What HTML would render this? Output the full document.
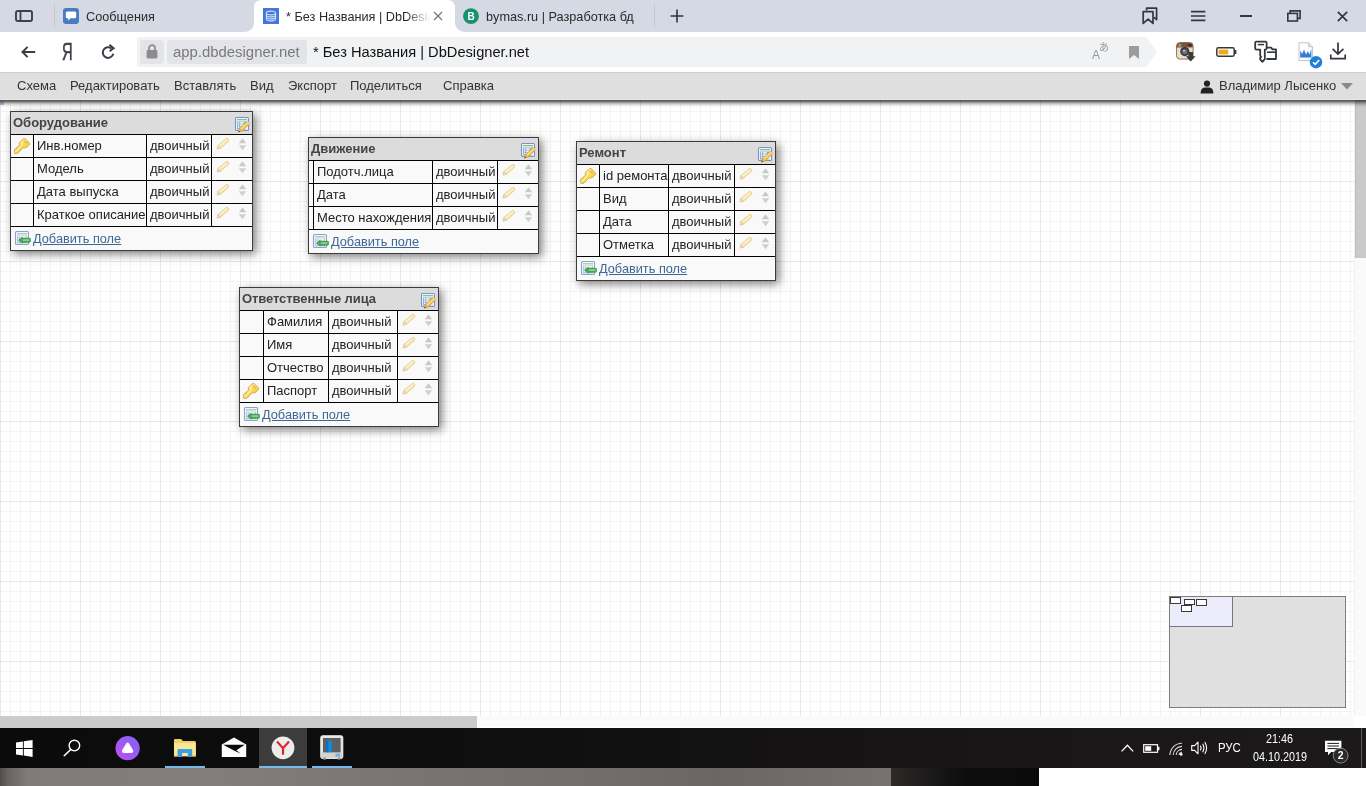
<!DOCTYPE html><html lang="ru"><head><meta charset="utf-8"><title>* Без Названия | DbDesigner.net</title><style>
*{box-sizing:border-box;margin:0;padding:0}
html,body{width:1366px;height:786px;overflow:hidden;background:#fff}
body{position:relative;font-family:"Liberation Sans", Arial, sans-serif;font-size:13px;color:#222}
.abs{position:absolute}
#tabbar,#addr,#menubar,#taskbar,.tbl{will-change:transform}
#tabbar{position:absolute;left:0;top:0;width:1366px;height:32px;background:#d5d9e3}
#addr{position:absolute;left:0;top:32px;width:1366px;height:40px;background:#fff}
#menubar{position:absolute;left:0;top:72px;width:1366px;height:28px;background:#dfdfdf;border-top:1px solid #cdcdcd;border-bottom:1px solid #e8e8e8;z-index:5}
#mshadow{position:absolute;left:0;top:100px;width:1366px;height:8px;z-index:4;background:linear-gradient(to bottom,rgba(0,0,0,.70) 0,rgba(0,0,0,.575) 1px,rgba(0,0,0,.45) 2px,rgba(0,0,0,.325) 3px,rgba(0,0,0,.2) 4px,rgba(0,0,0,.11) 5px,rgba(0,0,0,.05) 6px,rgba(0,0,0,0) 7.5px)}
#menubar span{position:absolute;top:5px;font-size:13px;line-height:16px;color:#333;white-space:nowrap}
#canvas{position:absolute;left:0;top:100px;width:1354px;height:616px;overflow:hidden;background-color:#fff;
 background-image:linear-gradient(to bottom,#e7e7e7 1px,transparent 1px),linear-gradient(to right,#e7e7e7 1px,transparent 1px),linear-gradient(to bottom,#f3f3f3 1px,transparent 1px),linear-gradient(to right,#f3f3f3 1px,transparent 1px);
 background-size:80px 80px,80px 80px,10px 10px,10px 10px;
 background-position:0 1px,0 0,0 1px,0 0;}
.tbl{position:absolute;box-sizing:content-box;border:1px solid #3c3c3c;background:#f9f9f9;box-shadow:3px 3px 9px rgba(0,0,0,.5)}
.th{position:absolute;left:0;top:0;height:22px;background:#dcdcdc;font-weight:bold;font-size:13px;line-height:22px;padding-left:2px;color:#444;white-space:nowrap}
.td{position:absolute;height:22px;line-height:22px;padding-left:3px;white-space:nowrap;color:#222;overflow:hidden}
.hl{position:absolute;left:0;height:1px;background:#000}
.vl{position:absolute;width:1px;background:#000}
.ic{position:absolute;display:block;overflow:visible}
.add{position:absolute;height:23px;line-height:23px;font-size:12.75px;color:#3d6796;text-decoration:underline;white-space:nowrap}
#vsb{position:absolute;left:1354px;top:100px;width:12px;height:616px;background:#fafafa;border-left:1px solid #f0f0f0}
#vsb i{position:absolute;left:0;top:0;width:12px;height:158px;background:#c9c9c9;border-left:1px solid #bcbcbc}
#hsb{position:absolute;left:0;top:716px;width:1354px;height:11px;background:#fafafa}
#hsb i{position:absolute;left:0;top:0;width:477px;height:12px;background:#cbcbcb}
#taskbar{position:absolute;left:0;top:728px;width:1366px;height:40px;background:linear-gradient(90deg,#0b0b0b 0%,#0e0e0e 30%,#151314 60%,#1a1718 80%,#1b191a 100%)}
#strip{position:absolute;left:0;top:768px;width:1366px;height:18px;background:#fff}
#strip .a{position:absolute;left:0;top:0;width:891px;height:18px;background:linear-gradient(90deg,#4f4a48 0,#6a6361 8px,#827a78 28px,#857d7b 200px,#7b7371 420px,#726c6b 600px,#6b6566 720px,#777172 891px)}
#strip .b{position:absolute;left:891px;top:0;width:148px;height:18px;background:linear-gradient(90deg,#2e2a2a,#1c1a1a 25%,#0d0d0d 50%,#0b0b0b)}
#mini{position:absolute;left:1169px;top:596px;width:177px;height:112px;background:#e0e0e0;border:1px solid #7d7d7d;z-index:3}
#mini .vp{position:absolute;left:0;top:0;width:63px;height:30px;background:#ececfc;border-right:1px solid #777;border-bottom:1px solid #777}
#mini b{position:absolute;background:#fff;border:1px solid #3a3a3a}
.tt{position:absolute;white-space:nowrap;font-size:12.7px;line-height:16px;color:#2a2a2a}
.tray{position:absolute;color:#fff;white-space:nowrap;font-size:10.8px;line-height:12px;transform:scaleY(1.13);transform-origin:0 81%}
</style></head><body>
<svg width="0" height="0" style="position:absolute"><defs><linearGradient id="kg" x1="0" y1="0" x2="1" y2="1"><stop offset="0" stop-color="#fdf3ac"/><stop offset=".5" stop-color="#f8d95a"/><stop offset="1" stop-color="#efbf33"/></linearGradient></defs></svg>
<div id="tabbar"><svg class="ic" style="left:244px;top:0" width="222" height="32" viewBox="0 0 222 32"><path d="M0 32 Q8 32 10 24 L10 8 Q10 0 18 0 L203 0 Q211 0 211 8 L211 24 Q213 32 222 32 Z" fill="#fff"/></svg><svg class="ic" style="left:15px;top:10px" width="18" height="12" viewBox="0 0 18 12"><rect x="1" y="1" width="16" height="10" rx="1.8" fill="none" stroke="#3b404b" stroke-width="1.9"/><rect x="4.6" y="1" width="1.8" height="10" fill="#3b404b"/></svg><div class="abs" style="left:54px;top:4px;width:1px;height:23px;background:#c3c7d1"></div><svg class="ic" style="left:63px;top:8px" width="16" height="16" viewBox="0 0 16 16"><rect width="16" height="16" rx="3.2" fill="#4a7cc2"/><path d="M4.3 3.6 H11.7 Q13.2 3.6 13.2 5.1 V8.7 Q13.2 10.2 11.7 10.2 H7.6 L5.2 12.4 V10.2 H4.3 Q2.8 10.2 2.8 8.7 V5.1 Q2.8 3.6 4.3 3.6 Z" fill="#fff"/></svg><div class="tt" style="left:86px;top:9px">Сообщения</div><svg class="ic" style="left:263px;top:8px" width="16" height="16" viewBox="0 0 16 16"><rect width="16" height="16" fill="#4577d6"/><g fill="none" stroke="#cfe0ff" stroke-width="1.1"><ellipse cx="8" cy="5" rx="4.6" ry="1.9"/><path d="M3.4 5 V11 C3.4 13.5 12.6 13.5 12.6 11 V5"/><path d="M3.4 7 C3.4 9.5 12.6 9.5 12.6 7 M3.4 9 C3.4 11.5 12.6 11.5 12.6 9"/></g></svg><div class="tt" style="left:286px;top:9px;width:146px;overflow:hidden;-webkit-mask-image:linear-gradient(90deg,#000 120px,transparent 144px);mask-image:linear-gradient(90deg,#000 120px,transparent 144px)">* Без Названия | DbDesigner.net</div><svg class="ic" style="left:433px;top:11px" width="10" height="10" viewBox="0 0 10 10"><path d="M1 1 L9 9 M9 1 L1 9" stroke="#6d7078" stroke-width="1.1" fill="none"/></svg><svg class="ic" style="left:463px;top:8px" width="16" height="16" viewBox="0 0 16 16"><circle cx="8" cy="8.2" r="7.9" fill="#179270"/><text x="8" y="11.8" text-anchor="middle" font-family="Liberation Sans, Arial, sans-serif" font-weight="bold" font-size="10" fill="#fff">B</text></svg><div class="tt" style="left:486px;top:9px">bymas.ru | Разработка бд</div><div class="abs" style="left:654px;top:4px;width:1px;height:23px;background:#c3c7d1"></div><svg class="ic" style="left:670px;top:9px" width="14" height="14" viewBox="0 0 14 14"><path d="M7 .6 V13.4 M.6 7 H13.4" stroke="#2f333b" stroke-width="1.6" fill="none"/></svg><svg class="ic" style="left:1142px;top:7px" width="16" height="18" viewBox="0 0 16 18"><path d="M4.6 3.6 V1.2 H14.6 V12.6 L12 10.4" fill="none" stroke="#33373f" stroke-width="1.7" stroke-linejoin="round"/><path d="M1.2 4.6 H11 V16.4 L6.1 12.2 L1.2 16.4 Z" fill="none" stroke="#33373f" stroke-width="1.7" stroke-linejoin="round"/></svg><svg class="ic" style="left:1191px;top:10px" width="15" height="12" viewBox="0 0 15 12"><path d="M0 1.6 H14.4 M0 6 H14.4 M0 10.4 H14.4" stroke="#33373f" stroke-width="1.7"/></svg><div class="abs" style="left:1240px;top:15px;width:12px;height:2px;background:#33373f"></div><svg class="ic" style="left:1287px;top:10px" width="14" height="12" viewBox="0 0 14 12"><path d="M3.2 3 V.9 H13.1 V8.4 H10.6" fill="none" stroke="#33373f" stroke-width="1.6"/><rect x=".8" y="3.4" width="9.6" height="7.6" fill="none" stroke="#33373f" stroke-width="1.6"/></svg><svg class="ic" style="left:1337px;top:11px" width="11" height="11" viewBox="0 0 11 11"><path d="M.8 .8 L10.2 10.2 M10.2 .8 L.8 10.2" stroke="#33373f" stroke-width="1.7" fill="none"/></svg></div>
<div id="addr"><svg class="ic" style="left:21px;top:14px" width="15" height="12" viewBox="0 0 15 12"><path d="M14.2 6 H1.8 M6.6 .9 L1.5 6 L6.6 11.1" fill="none" stroke="#3a3e47" stroke-width="2" stroke-linejoin="miter"/></svg><div class="abs" style="left:62px;top:7px;font-size:23px;line-height:26px;color:#3a3e47;-webkit-text-stroke:.55px #3a3e47;transform:scaleX(.64);transform-origin:0 0">Я</div><svg class="ic" style="left:101px;top:12px" width="15" height="16" viewBox="0 0 15 16"><path d="M10.6 4.6 A5.3 5.3 0 1 0 12.3 9.6" fill="none" stroke="#3a3e47" stroke-width="2"/><path d="M8.4 .8 L12.6 4.2 L8.6 7.2" fill="none" stroke="#3a3e47" stroke-width="2" stroke-linejoin="miter"/></svg><svg class="ic" style="left:137px;top:5px" width="1022" height="30" viewBox="0 0 1022 30"><path d="M4 0 H1009 L1020 15 L1009 30 H4 Q0 30 0 26 V4 Q0 0 4 0 Z" fill="#f1f2f4"/></svg><div class="abs" style="left:140px;top:8px;width:24px;height:24px;border-radius:3px;background:#e3e4e7"></div><svg class="ic" style="left:146px;top:12px" width="12" height="15" viewBox="0 0 12 15"><path d="M3 6.4 V4.2 A3 3 0 0 1 9 4.2 V6.4" fill="none" stroke="#8b8b8b" stroke-width="1.7"/><rect x=".6" y="6" width="10.8" height="8.4" rx="1.4" fill="#8b8b8b"/></svg><div class="abs" style="left:167px;top:8px;width:140px;height:24px;border-radius:3px;background:#e3e4e7"></div><div class="abs" style="left:173px;top:10px;font-size:14.9px;line-height:20px;color:#7a7a7a;white-space:nowrap">app.dbdesigner.net</div><div class="abs" style="left:313px;top:10px;font-size:14.65px;line-height:20px;color:#111;white-space:nowrap">* Без Названия | DbDesigner.net</div><div class="abs" style="left:1092px;top:17px;font-size:12px;line-height:12px;color:#9a9a9a">A</div><div class="abs" style="left:1099px;top:11px;font-size:10px;line-height:10px;color:#9a9a9a;font-family:'Liberation Sans','Noto Sans CJK JP',sans-serif">あ</div><svg class="ic" style="left:1129px;top:14px" width="10" height="13" viewBox="0 0 10 13"><path d="M0 0 H10 V13 L5 9 L0 13 Z" fill="#9c9c9c"/></svg><svg class="ic" style="left:1176px;top:10px" width="20" height="20" viewBox="0 0 20 20"><rect x=".5" y=".5" width="16.6" height="16.6" rx="3.4" fill="#e9dcc8" stroke="#8a6a4f" stroke-width=".9"/><path d="M.8 4 Q.8 .8 4 .8 H13.6 Q16.8 .8 16.8 4 V5.6 H.8 Z" fill="#7b4f35"/><rect x="1.6" y="1.6" width="1" height="3.6" fill="#d9442f"/><rect x="2.8" y="1.6" width="1" height="3.6" fill="#e8a33a"/><rect x="4" y="1.6" width="1" height="3.6" fill="#5aa34a"/><rect x="5.2" y="1.6" width="1" height="3.6" fill="#3f7fcf"/><rect x="12.4" y="2" width="3.2" height="2.6" rx=".6" fill="#3a2a22"/><circle cx="8.8" cy="9.6" r="4.6" fill="#3b3b3f"/><circle cx="8.8" cy="9.6" r="2.6" fill="#6b6f7a"/><circle cx="8" cy="8.8" r=".9" fill="#d8dce6"/><path d="M12.4 10 H17 V14.2 H19.6 L14.7 19.6 L9.8 14.2 H12.4 Z" fill="#3a3a3a"/></svg><svg class="ic" style="left:1216px;top:15px" width="21" height="10" viewBox="0 0 21 10"><rect x=".8" y=".8" width="17.4" height="8.4" rx="1.6" fill="#fff" stroke="#33373f" stroke-width="1.5"/><rect x="18.6" y="3" width="1.8" height="4" rx=".6" fill="#33373f"/><rect x="2.6" y="2.6" width="9.6" height="4.8" fill="#f3a81c"/></svg><svg class="ic" style="left:1254px;top:8px" width="24" height="23" viewBox="0 0 24 23"><path d="M12 7.6 H17.2 L18.4 9.4 H22 V19 H12.4" fill="none" stroke="#33373f" stroke-width="1.8" stroke-linejoin="round"/><path d="M13 12.2 H22" stroke="#33373f" stroke-width="1.6"/><path d="M2.4 1.6 H11.4 Q12.6 1.6 12.6 2.8 V8.4 Q12.6 9.6 11.4 9.6 H10.8 V19.2 L8.4 21.8 L6.2 19.4 V17.8 L7.2 16.8 L6.2 15.8 V9.6 H2.4 Q1.2 9.6 1.2 8.4 V2.8 Q1.2 1.6 2.4 1.6 Z" fill="#fff" stroke="#33373f" stroke-width="1.8" stroke-linejoin="round"/><path d="M3.8 4.6 H10" stroke="#33373f" stroke-width="1.5"/></svg><svg class="ic" style="left:1298px;top:10px" width="26" height="28" viewBox="0 0 26 28"><path d="M1 .8 H10.6 L14.6 4.8 V18.6 H1 Z" fill="#fdfdfd" stroke="#b9bdc4" stroke-width=".9"/><path d="M10.6 .8 V4.8 H14.6" fill="#e6e8ec" stroke="#b9bdc4" stroke-width=".8"/><path d="M2.2 15.6 V8.6 L4.2 12 L6 7.4 L8 12.4 L9.8 9.2 L11.6 12.6 L13.4 6.8 V15.6 Z" fill="#2f7fd6"/><circle cx="18" cy="20.2" r="6.2" fill="#1e7fe0"/><path d="M15 20.2 L17.2 22.4 L21.2 18" fill="none" stroke="#fff" stroke-width="1.6"/></svg><svg class="ic" style="left:1330px;top:10px" width="16" height="18" viewBox="0 0 16 18"><path d="M8 .6 V11.4 M2.6 6.8 L8 12 L13.4 6.8 M.8 12.4 V16.6 H15.2 V12.4" fill="none" stroke="#33373f" stroke-width="1.7"/></svg></div>
<div id="menubar"><span style="left:17px">Схема</span><span style="left:70px">Редактировать</span><span style="left:174px">Вставлять</span><span style="left:250px">Вид</span><span style="left:288px">Экспорт</span><span style="left:350px">Поделиться</span><span style="left:443px">Справка</span><svg class="ic" style="left:1200px;top:7px" width="14" height="14" viewBox="0 0 14 14"><circle cx="7" cy="3.6" r="3.1" fill="#222"/><path d="M.6 13.6 Q.6 8 4.6 7.6 L9.4 7.6 Q13.4 8 13.4 13.6 Z" fill="#222"/></svg><span style="left:1219px">Владимир Лысенко</span><svg class="ic" style="left:1341px;top:10px" width="12" height="7" viewBox="0 0 12 7"><path d="M0 0 L12 0 L6 6.4 Z" fill="#8a8a8a"/></svg></div><div id="mshadow"></div>
<div id="canvas"><div class="abs" style="left:0;top:1px;width:4px;height:4px;background:#c6c9e8"></div>
<div class="tbl" style="left:10px;top:11px;width:241px;height:138px">
<div class="th" style="width:241px">Оборудование</div>
<svg class="ic" style="left:223px;top:4px" width="17" height="17" viewBox="0 0 17 17"><rect x="1.5" y="1.5" width="13" height="13" rx="1" fill="#eef7f3" stroke="#7894c8" stroke-width="1.1"/><rect x="3" y="3.2" width="10" height="1" fill="#6fae78"/><rect x="3" y="5.5" width="10" height="8" fill="#92a9d9"/><rect x="3.9" y="6.2" width="1.3" height="1.4" fill="#fff"/><rect x="6.2" y="6.2" width="3.4" height="1.4" fill="#fff"/><rect x="3.9" y="8.4" width="1.3" height="1.4" fill="#fff"/><rect x="6.2" y="8.4" width="3.4" height="1.4" fill="#fff"/><rect x="3.9" y="10.6" width="1.3" height="1.4" fill="#fff"/><rect x="6.2" y="10.6" width="2" height="1.4" fill="#fff"/><path d="M9.4 13 L13.6 13.2 L13.6 9.6 Z" fill="#f4f1fa"/><path d="M13.4 5.2 L15.8 7.6 L8.1 15 L4.4 16.2 L5.7 12.6 Z" fill="#f0bf45" stroke="#d3962f" stroke-width=".7" stroke-linejoin="round"/><path d="M13.4 5.2 L15.8 7.6 L14.7 8.7 L12.3 6.3 Z" fill="#f5d0ae"/><path d="M7 13.2 L13.2 7.2" stroke="#fbe873" stroke-width="1.2" fill="none"/><path d="M5.7 12.6 L8.1 15 L4.4 16.2 Z" fill="#e2ab62"/><path d="M4.4 16.2 L4.9 14.7 L6 15.7 Z" fill="#2e2210"/></svg>
<div class="hl" style="top:22px;width:241px"></div>
<svg class="ic" style="left:3px;top:26px" width="16" height="16" viewBox="0 0 16 16"><path d="M9.5 .5 L11 .5 L15.5 4.8 L15.6 6.2 L12.7 9.4 L10.5 10.1 L9.2 9.7 L4 15.2 L.9 15.5 L.4 14.6 L.4 11.6 L1.3 10.6 L2.2 11 L2.4 9.6 L3.6 9.6 L3.8 8.4 L5.4 7.7 L5.3 4.5 Z" fill="url(#kg)" stroke="#d6a441" stroke-width=".85" stroke-linejoin="round"/><path d="M10.5 3.4 L12.5 5" stroke="#cf9f36" stroke-width="1" stroke-linecap="round" fill="none"/><path d="M1.6 13.6 L7.6 7.6 L8.4 3.2" stroke="#fef6c0" stroke-width="1.3" fill="none" opacity=".75" stroke-linejoin="round"/></svg>
<div class="td" style="left:23px;top:23px;width:112px">Инв.номер</div>
<div class="td" style="left:136px;top:23px;width:64px">двоичный</div>
<svg class="ic" style="left:205px;top:25px;opacity:.6" width="14" height="13" viewBox="0 0 14 13"><path d="M10.2 1.7 Q11.6 1 12.5 2.3 Q13.2 3.5 12.3 4.4 L4.7 11 L1.2 12 L1.9 8.6 Z" fill="#f9dc7a" stroke="#d9a755" stroke-width=".9" stroke-linejoin="round"/><path d="M1.9 8.6 L4.7 11 L1.2 12 Z" fill="#ead6ad" stroke="#b89a68" stroke-width=".6"/><path d="M3.6 8.9 L10.8 2.9" stroke="#fff4c0" stroke-width="1.2" fill="none"/></svg>
<svg class="ic" style="left:227px;top:26px" width="9" height="13" viewBox="0 0 9 13"><path d="M.8 5.2 L4.5 .2 L8.2 5.2 Z" fill="#c9c9c9"/><path d="M.8 7.2 L4.5 12.2 L8.2 7.2 Z" fill="#cfcfcf"/></svg>
<div class="hl" style="top:45px;width:241px"></div>
<div class="td" style="left:23px;top:46px;width:112px">Модель</div>
<div class="td" style="left:136px;top:46px;width:64px">двоичный</div>
<svg class="ic" style="left:205px;top:48px;opacity:.6" width="14" height="13" viewBox="0 0 14 13"><path d="M10.2 1.7 Q11.6 1 12.5 2.3 Q13.2 3.5 12.3 4.4 L4.7 11 L1.2 12 L1.9 8.6 Z" fill="#f9dc7a" stroke="#d9a755" stroke-width=".9" stroke-linejoin="round"/><path d="M1.9 8.6 L4.7 11 L1.2 12 Z" fill="#ead6ad" stroke="#b89a68" stroke-width=".6"/><path d="M3.6 8.9 L10.8 2.9" stroke="#fff4c0" stroke-width="1.2" fill="none"/></svg>
<svg class="ic" style="left:227px;top:49px" width="9" height="13" viewBox="0 0 9 13"><path d="M.8 5.2 L4.5 .2 L8.2 5.2 Z" fill="#c9c9c9"/><path d="M.8 7.2 L4.5 12.2 L8.2 7.2 Z" fill="#cfcfcf"/></svg>
<div class="hl" style="top:68px;width:241px"></div>
<div class="td" style="left:23px;top:69px;width:112px">Дата выпуска</div>
<div class="td" style="left:136px;top:69px;width:64px">двоичный</div>
<svg class="ic" style="left:205px;top:71px;opacity:.6" width="14" height="13" viewBox="0 0 14 13"><path d="M10.2 1.7 Q11.6 1 12.5 2.3 Q13.2 3.5 12.3 4.4 L4.7 11 L1.2 12 L1.9 8.6 Z" fill="#f9dc7a" stroke="#d9a755" stroke-width=".9" stroke-linejoin="round"/><path d="M1.9 8.6 L4.7 11 L1.2 12 Z" fill="#ead6ad" stroke="#b89a68" stroke-width=".6"/><path d="M3.6 8.9 L10.8 2.9" stroke="#fff4c0" stroke-width="1.2" fill="none"/></svg>
<svg class="ic" style="left:227px;top:72px" width="9" height="13" viewBox="0 0 9 13"><path d="M.8 5.2 L4.5 .2 L8.2 5.2 Z" fill="#c9c9c9"/><path d="M.8 7.2 L4.5 12.2 L8.2 7.2 Z" fill="#cfcfcf"/></svg>
<div class="hl" style="top:91px;width:241px"></div>
<div class="td" style="left:23px;top:92px;width:112px">Краткое описание</div>
<div class="td" style="left:136px;top:92px;width:64px">двоичный</div>
<svg class="ic" style="left:205px;top:94px;opacity:.6" width="14" height="13" viewBox="0 0 14 13"><path d="M10.2 1.7 Q11.6 1 12.5 2.3 Q13.2 3.5 12.3 4.4 L4.7 11 L1.2 12 L1.9 8.6 Z" fill="#f9dc7a" stroke="#d9a755" stroke-width=".9" stroke-linejoin="round"/><path d="M1.9 8.6 L4.7 11 L1.2 12 Z" fill="#ead6ad" stroke="#b89a68" stroke-width=".6"/><path d="M3.6 8.9 L10.8 2.9" stroke="#fff4c0" stroke-width="1.2" fill="none"/></svg>
<svg class="ic" style="left:227px;top:95px" width="9" height="13" viewBox="0 0 9 13"><path d="M.8 5.2 L4.5 .2 L8.2 5.2 Z" fill="#c9c9c9"/><path d="M.8 7.2 L4.5 12.2 L8.2 7.2 Z" fill="#cfcfcf"/></svg>
<div class="hl" style="top:114px;width:241px"></div>
<div class="vl" style="left:22px;top:23px;height:91px"></div>
<div class="vl" style="left:135px;top:23px;height:91px"></div>
<div class="vl" style="left:200px;top:23px;height:91px"></div>
<svg class="ic" style="left:3px;top:118px" width="17" height="16" viewBox="0 0 17 16"><rect x="1.5" y="1.5" width="13" height="13" rx="1" fill="#f1f6fb" stroke="#8aa3d0" stroke-width="1.1"/><rect x="3" y="3.3" width="10" height="1" fill="#8cc48c"/><rect x="3" y="5.6" width="10" height="7.8" fill="#b4c4e6"/><rect x="4" y="6.3" width="1.2" height="1.2" fill="#fff"/><rect x="6" y="6.3" width="6" height="1.2" fill="#fff"/><rect x="4" y="8.4" width="1.2" height="1.2" fill="#fff"/><rect x="4" y="10.5" width="1.2" height="1.2" fill="#fff"/><path d="M4.6 10.2 L8.2 7.3 L8.2 8.3 L15.8 8.3 Q16.4 8.3 16.4 8.9 L16.4 11.6 Q16.4 12.2 15.8 12.2 L8.2 12.2 L8.2 13.1 Z" fill="#4caf50" stroke="#2e8b3a" stroke-width=".7" stroke-linejoin="round"/><rect x="9" y="9.3" width="6.4" height="1.6" fill="#8fd694"/></svg>
<a class="add" style="left:22px;top:115px">Добавить поле</a>
</div>
<div class="tbl" style="left:308px;top:37px;width:229px;height:115px">
<div class="th" style="width:229px">Движение</div>
<svg class="ic" style="left:211px;top:4px" width="17" height="17" viewBox="0 0 17 17"><rect x="1.5" y="1.5" width="13" height="13" rx="1" fill="#eef7f3" stroke="#7894c8" stroke-width="1.1"/><rect x="3" y="3.2" width="10" height="1" fill="#6fae78"/><rect x="3" y="5.5" width="10" height="8" fill="#92a9d9"/><rect x="3.9" y="6.2" width="1.3" height="1.4" fill="#fff"/><rect x="6.2" y="6.2" width="3.4" height="1.4" fill="#fff"/><rect x="3.9" y="8.4" width="1.3" height="1.4" fill="#fff"/><rect x="6.2" y="8.4" width="3.4" height="1.4" fill="#fff"/><rect x="3.9" y="10.6" width="1.3" height="1.4" fill="#fff"/><rect x="6.2" y="10.6" width="2" height="1.4" fill="#fff"/><path d="M9.4 13 L13.6 13.2 L13.6 9.6 Z" fill="#f4f1fa"/><path d="M13.4 5.2 L15.8 7.6 L8.1 15 L4.4 16.2 L5.7 12.6 Z" fill="#f0bf45" stroke="#d3962f" stroke-width=".7" stroke-linejoin="round"/><path d="M13.4 5.2 L15.8 7.6 L14.7 8.7 L12.3 6.3 Z" fill="#f5d0ae"/><path d="M7 13.2 L13.2 7.2" stroke="#fbe873" stroke-width="1.2" fill="none"/><path d="M5.7 12.6 L8.1 15 L4.4 16.2 Z" fill="#e2ab62"/><path d="M4.4 16.2 L4.9 14.7 L6 15.7 Z" fill="#2e2210"/></svg>
<div class="hl" style="top:22px;width:229px"></div>
<div class="td" style="left:5px;top:23px;width:118px">Подотч.лица</div>
<div class="td" style="left:124px;top:23px;width:64px">двоичный</div>
<svg class="ic" style="left:193px;top:25px;opacity:.6" width="14" height="13" viewBox="0 0 14 13"><path d="M10.2 1.7 Q11.6 1 12.5 2.3 Q13.2 3.5 12.3 4.4 L4.7 11 L1.2 12 L1.9 8.6 Z" fill="#f9dc7a" stroke="#d9a755" stroke-width=".9" stroke-linejoin="round"/><path d="M1.9 8.6 L4.7 11 L1.2 12 Z" fill="#ead6ad" stroke="#b89a68" stroke-width=".6"/><path d="M3.6 8.9 L10.8 2.9" stroke="#fff4c0" stroke-width="1.2" fill="none"/></svg>
<svg class="ic" style="left:215px;top:26px" width="9" height="13" viewBox="0 0 9 13"><path d="M.8 5.2 L4.5 .2 L8.2 5.2 Z" fill="#c9c9c9"/><path d="M.8 7.2 L4.5 12.2 L8.2 7.2 Z" fill="#cfcfcf"/></svg>
<div class="hl" style="top:45px;width:229px"></div>
<div class="td" style="left:5px;top:46px;width:118px">Дата</div>
<div class="td" style="left:124px;top:46px;width:64px">двоичный</div>
<svg class="ic" style="left:193px;top:48px;opacity:.6" width="14" height="13" viewBox="0 0 14 13"><path d="M10.2 1.7 Q11.6 1 12.5 2.3 Q13.2 3.5 12.3 4.4 L4.7 11 L1.2 12 L1.9 8.6 Z" fill="#f9dc7a" stroke="#d9a755" stroke-width=".9" stroke-linejoin="round"/><path d="M1.9 8.6 L4.7 11 L1.2 12 Z" fill="#ead6ad" stroke="#b89a68" stroke-width=".6"/><path d="M3.6 8.9 L10.8 2.9" stroke="#fff4c0" stroke-width="1.2" fill="none"/></svg>
<svg class="ic" style="left:215px;top:49px" width="9" height="13" viewBox="0 0 9 13"><path d="M.8 5.2 L4.5 .2 L8.2 5.2 Z" fill="#c9c9c9"/><path d="M.8 7.2 L4.5 12.2 L8.2 7.2 Z" fill="#cfcfcf"/></svg>
<div class="hl" style="top:68px;width:229px"></div>
<div class="td" style="left:5px;top:69px;width:118px">Место нахождения</div>
<div class="td" style="left:124px;top:69px;width:64px">двоичный</div>
<svg class="ic" style="left:193px;top:71px;opacity:.6" width="14" height="13" viewBox="0 0 14 13"><path d="M10.2 1.7 Q11.6 1 12.5 2.3 Q13.2 3.5 12.3 4.4 L4.7 11 L1.2 12 L1.9 8.6 Z" fill="#f9dc7a" stroke="#d9a755" stroke-width=".9" stroke-linejoin="round"/><path d="M1.9 8.6 L4.7 11 L1.2 12 Z" fill="#ead6ad" stroke="#b89a68" stroke-width=".6"/><path d="M3.6 8.9 L10.8 2.9" stroke="#fff4c0" stroke-width="1.2" fill="none"/></svg>
<svg class="ic" style="left:215px;top:72px" width="9" height="13" viewBox="0 0 9 13"><path d="M.8 5.2 L4.5 .2 L8.2 5.2 Z" fill="#c9c9c9"/><path d="M.8 7.2 L4.5 12.2 L8.2 7.2 Z" fill="#cfcfcf"/></svg>
<div class="hl" style="top:91px;width:229px"></div>
<div class="vl" style="left:4px;top:23px;height:68px"></div>
<div class="vl" style="left:123px;top:23px;height:68px"></div>
<div class="vl" style="left:188px;top:23px;height:68px"></div>
<svg class="ic" style="left:3px;top:95px" width="17" height="16" viewBox="0 0 17 16"><rect x="1.5" y="1.5" width="13" height="13" rx="1" fill="#f1f6fb" stroke="#8aa3d0" stroke-width="1.1"/><rect x="3" y="3.3" width="10" height="1" fill="#8cc48c"/><rect x="3" y="5.6" width="10" height="7.8" fill="#b4c4e6"/><rect x="4" y="6.3" width="1.2" height="1.2" fill="#fff"/><rect x="6" y="6.3" width="6" height="1.2" fill="#fff"/><rect x="4" y="8.4" width="1.2" height="1.2" fill="#fff"/><rect x="4" y="10.5" width="1.2" height="1.2" fill="#fff"/><path d="M4.6 10.2 L8.2 7.3 L8.2 8.3 L15.8 8.3 Q16.4 8.3 16.4 8.9 L16.4 11.6 Q16.4 12.2 15.8 12.2 L8.2 12.2 L8.2 13.1 Z" fill="#4caf50" stroke="#2e8b3a" stroke-width=".7" stroke-linejoin="round"/><rect x="9" y="9.3" width="6.4" height="1.6" fill="#8fd694"/></svg>
<a class="add" style="left:22px;top:92px">Добавить поле</a>
</div>
<div class="tbl" style="left:576px;top:41px;width:198px;height:138px">
<div class="th" style="width:198px">Ремонт</div>
<svg class="ic" style="left:180px;top:4px" width="17" height="17" viewBox="0 0 17 17"><rect x="1.5" y="1.5" width="13" height="13" rx="1" fill="#eef7f3" stroke="#7894c8" stroke-width="1.1"/><rect x="3" y="3.2" width="10" height="1" fill="#6fae78"/><rect x="3" y="5.5" width="10" height="8" fill="#92a9d9"/><rect x="3.9" y="6.2" width="1.3" height="1.4" fill="#fff"/><rect x="6.2" y="6.2" width="3.4" height="1.4" fill="#fff"/><rect x="3.9" y="8.4" width="1.3" height="1.4" fill="#fff"/><rect x="6.2" y="8.4" width="3.4" height="1.4" fill="#fff"/><rect x="3.9" y="10.6" width="1.3" height="1.4" fill="#fff"/><rect x="6.2" y="10.6" width="2" height="1.4" fill="#fff"/><path d="M9.4 13 L13.6 13.2 L13.6 9.6 Z" fill="#f4f1fa"/><path d="M13.4 5.2 L15.8 7.6 L8.1 15 L4.4 16.2 L5.7 12.6 Z" fill="#f0bf45" stroke="#d3962f" stroke-width=".7" stroke-linejoin="round"/><path d="M13.4 5.2 L15.8 7.6 L14.7 8.7 L12.3 6.3 Z" fill="#f5d0ae"/><path d="M7 13.2 L13.2 7.2" stroke="#fbe873" stroke-width="1.2" fill="none"/><path d="M5.7 12.6 L8.1 15 L4.4 16.2 Z" fill="#e2ab62"/><path d="M4.4 16.2 L4.9 14.7 L6 15.7 Z" fill="#2e2210"/></svg>
<div class="hl" style="top:22px;width:198px"></div>
<svg class="ic" style="left:3px;top:26px" width="16" height="16" viewBox="0 0 16 16"><path d="M9.5 .5 L11 .5 L15.5 4.8 L15.6 6.2 L12.7 9.4 L10.5 10.1 L9.2 9.7 L4 15.2 L.9 15.5 L.4 14.6 L.4 11.6 L1.3 10.6 L2.2 11 L2.4 9.6 L3.6 9.6 L3.8 8.4 L5.4 7.7 L5.3 4.5 Z" fill="url(#kg)" stroke="#d6a441" stroke-width=".85" stroke-linejoin="round"/><path d="M10.5 3.4 L12.5 5" stroke="#cf9f36" stroke-width="1" stroke-linecap="round" fill="none"/><path d="M1.6 13.6 L7.6 7.6 L8.4 3.2" stroke="#fef6c0" stroke-width="1.3" fill="none" opacity=".75" stroke-linejoin="round"/></svg>
<div class="td" style="left:23px;top:23px;width:68px">id ремонта</div>
<div class="td" style="left:92px;top:23px;width:65px">двоичный</div>
<svg class="ic" style="left:162px;top:25px;opacity:.6" width="14" height="13" viewBox="0 0 14 13"><path d="M10.2 1.7 Q11.6 1 12.5 2.3 Q13.2 3.5 12.3 4.4 L4.7 11 L1.2 12 L1.9 8.6 Z" fill="#f9dc7a" stroke="#d9a755" stroke-width=".9" stroke-linejoin="round"/><path d="M1.9 8.6 L4.7 11 L1.2 12 Z" fill="#ead6ad" stroke="#b89a68" stroke-width=".6"/><path d="M3.6 8.9 L10.8 2.9" stroke="#fff4c0" stroke-width="1.2" fill="none"/></svg>
<svg class="ic" style="left:184px;top:26px" width="9" height="13" viewBox="0 0 9 13"><path d="M.8 5.2 L4.5 .2 L8.2 5.2 Z" fill="#c9c9c9"/><path d="M.8 7.2 L4.5 12.2 L8.2 7.2 Z" fill="#cfcfcf"/></svg>
<div class="hl" style="top:45px;width:198px"></div>
<div class="td" style="left:23px;top:46px;width:68px">Вид</div>
<div class="td" style="left:92px;top:46px;width:65px">двоичный</div>
<svg class="ic" style="left:162px;top:48px;opacity:.6" width="14" height="13" viewBox="0 0 14 13"><path d="M10.2 1.7 Q11.6 1 12.5 2.3 Q13.2 3.5 12.3 4.4 L4.7 11 L1.2 12 L1.9 8.6 Z" fill="#f9dc7a" stroke="#d9a755" stroke-width=".9" stroke-linejoin="round"/><path d="M1.9 8.6 L4.7 11 L1.2 12 Z" fill="#ead6ad" stroke="#b89a68" stroke-width=".6"/><path d="M3.6 8.9 L10.8 2.9" stroke="#fff4c0" stroke-width="1.2" fill="none"/></svg>
<svg class="ic" style="left:184px;top:49px" width="9" height="13" viewBox="0 0 9 13"><path d="M.8 5.2 L4.5 .2 L8.2 5.2 Z" fill="#c9c9c9"/><path d="M.8 7.2 L4.5 12.2 L8.2 7.2 Z" fill="#cfcfcf"/></svg>
<div class="hl" style="top:68px;width:198px"></div>
<div class="td" style="left:23px;top:69px;width:68px">Дата</div>
<div class="td" style="left:92px;top:69px;width:65px">двоичный</div>
<svg class="ic" style="left:162px;top:71px;opacity:.6" width="14" height="13" viewBox="0 0 14 13"><path d="M10.2 1.7 Q11.6 1 12.5 2.3 Q13.2 3.5 12.3 4.4 L4.7 11 L1.2 12 L1.9 8.6 Z" fill="#f9dc7a" stroke="#d9a755" stroke-width=".9" stroke-linejoin="round"/><path d="M1.9 8.6 L4.7 11 L1.2 12 Z" fill="#ead6ad" stroke="#b89a68" stroke-width=".6"/><path d="M3.6 8.9 L10.8 2.9" stroke="#fff4c0" stroke-width="1.2" fill="none"/></svg>
<svg class="ic" style="left:184px;top:72px" width="9" height="13" viewBox="0 0 9 13"><path d="M.8 5.2 L4.5 .2 L8.2 5.2 Z" fill="#c9c9c9"/><path d="M.8 7.2 L4.5 12.2 L8.2 7.2 Z" fill="#cfcfcf"/></svg>
<div class="hl" style="top:91px;width:198px"></div>
<div class="td" style="left:23px;top:92px;width:68px">Отметка</div>
<div class="td" style="left:92px;top:92px;width:65px">двоичный</div>
<svg class="ic" style="left:162px;top:94px;opacity:.6" width="14" height="13" viewBox="0 0 14 13"><path d="M10.2 1.7 Q11.6 1 12.5 2.3 Q13.2 3.5 12.3 4.4 L4.7 11 L1.2 12 L1.9 8.6 Z" fill="#f9dc7a" stroke="#d9a755" stroke-width=".9" stroke-linejoin="round"/><path d="M1.9 8.6 L4.7 11 L1.2 12 Z" fill="#ead6ad" stroke="#b89a68" stroke-width=".6"/><path d="M3.6 8.9 L10.8 2.9" stroke="#fff4c0" stroke-width="1.2" fill="none"/></svg>
<svg class="ic" style="left:184px;top:95px" width="9" height="13" viewBox="0 0 9 13"><path d="M.8 5.2 L4.5 .2 L8.2 5.2 Z" fill="#c9c9c9"/><path d="M.8 7.2 L4.5 12.2 L8.2 7.2 Z" fill="#cfcfcf"/></svg>
<div class="hl" style="top:114px;width:198px"></div>
<div class="vl" style="left:22px;top:23px;height:91px"></div>
<div class="vl" style="left:91px;top:23px;height:91px"></div>
<div class="vl" style="left:157px;top:23px;height:91px"></div>
<svg class="ic" style="left:3px;top:118px" width="17" height="16" viewBox="0 0 17 16"><rect x="1.5" y="1.5" width="13" height="13" rx="1" fill="#f1f6fb" stroke="#8aa3d0" stroke-width="1.1"/><rect x="3" y="3.3" width="10" height="1" fill="#8cc48c"/><rect x="3" y="5.6" width="10" height="7.8" fill="#b4c4e6"/><rect x="4" y="6.3" width="1.2" height="1.2" fill="#fff"/><rect x="6" y="6.3" width="6" height="1.2" fill="#fff"/><rect x="4" y="8.4" width="1.2" height="1.2" fill="#fff"/><rect x="4" y="10.5" width="1.2" height="1.2" fill="#fff"/><path d="M4.6 10.2 L8.2 7.3 L8.2 8.3 L15.8 8.3 Q16.4 8.3 16.4 8.9 L16.4 11.6 Q16.4 12.2 15.8 12.2 L8.2 12.2 L8.2 13.1 Z" fill="#4caf50" stroke="#2e8b3a" stroke-width=".7" stroke-linejoin="round"/><rect x="9" y="9.3" width="6.4" height="1.6" fill="#8fd694"/></svg>
<a class="add" style="left:22px;top:115px">Добавить поле</a>
</div>
<div class="tbl" style="left:239px;top:187px;width:198px;height:138px">
<div class="th" style="width:198px;letter-spacing:-.09px">Ответственные лица</div>
<svg class="ic" style="left:180px;top:4px" width="17" height="17" viewBox="0 0 17 17"><rect x="1.5" y="1.5" width="13" height="13" rx="1" fill="#eef7f3" stroke="#7894c8" stroke-width="1.1"/><rect x="3" y="3.2" width="10" height="1" fill="#6fae78"/><rect x="3" y="5.5" width="10" height="8" fill="#92a9d9"/><rect x="3.9" y="6.2" width="1.3" height="1.4" fill="#fff"/><rect x="6.2" y="6.2" width="3.4" height="1.4" fill="#fff"/><rect x="3.9" y="8.4" width="1.3" height="1.4" fill="#fff"/><rect x="6.2" y="8.4" width="3.4" height="1.4" fill="#fff"/><rect x="3.9" y="10.6" width="1.3" height="1.4" fill="#fff"/><rect x="6.2" y="10.6" width="2" height="1.4" fill="#fff"/><path d="M9.4 13 L13.6 13.2 L13.6 9.6 Z" fill="#f4f1fa"/><path d="M13.4 5.2 L15.8 7.6 L8.1 15 L4.4 16.2 L5.7 12.6 Z" fill="#f0bf45" stroke="#d3962f" stroke-width=".7" stroke-linejoin="round"/><path d="M13.4 5.2 L15.8 7.6 L14.7 8.7 L12.3 6.3 Z" fill="#f5d0ae"/><path d="M7 13.2 L13.2 7.2" stroke="#fbe873" stroke-width="1.2" fill="none"/><path d="M5.7 12.6 L8.1 15 L4.4 16.2 Z" fill="#e2ab62"/><path d="M4.4 16.2 L4.9 14.7 L6 15.7 Z" fill="#2e2210"/></svg>
<div class="hl" style="top:22px;width:198px"></div>
<div class="td" style="left:24px;top:23px;width:64px">Фамилия</div>
<div class="td" style="left:89px;top:23px;width:68px">двоичный</div>
<svg class="ic" style="left:162px;top:25px;opacity:.6" width="14" height="13" viewBox="0 0 14 13"><path d="M10.2 1.7 Q11.6 1 12.5 2.3 Q13.2 3.5 12.3 4.4 L4.7 11 L1.2 12 L1.9 8.6 Z" fill="#f9dc7a" stroke="#d9a755" stroke-width=".9" stroke-linejoin="round"/><path d="M1.9 8.6 L4.7 11 L1.2 12 Z" fill="#ead6ad" stroke="#b89a68" stroke-width=".6"/><path d="M3.6 8.9 L10.8 2.9" stroke="#fff4c0" stroke-width="1.2" fill="none"/></svg>
<svg class="ic" style="left:184px;top:26px" width="9" height="13" viewBox="0 0 9 13"><path d="M.8 5.2 L4.5 .2 L8.2 5.2 Z" fill="#c9c9c9"/><path d="M.8 7.2 L4.5 12.2 L8.2 7.2 Z" fill="#cfcfcf"/></svg>
<div class="hl" style="top:45px;width:198px"></div>
<div class="td" style="left:24px;top:46px;width:64px">Имя</div>
<div class="td" style="left:89px;top:46px;width:68px">двоичный</div>
<svg class="ic" style="left:162px;top:48px;opacity:.6" width="14" height="13" viewBox="0 0 14 13"><path d="M10.2 1.7 Q11.6 1 12.5 2.3 Q13.2 3.5 12.3 4.4 L4.7 11 L1.2 12 L1.9 8.6 Z" fill="#f9dc7a" stroke="#d9a755" stroke-width=".9" stroke-linejoin="round"/><path d="M1.9 8.6 L4.7 11 L1.2 12 Z" fill="#ead6ad" stroke="#b89a68" stroke-width=".6"/><path d="M3.6 8.9 L10.8 2.9" stroke="#fff4c0" stroke-width="1.2" fill="none"/></svg>
<svg class="ic" style="left:184px;top:49px" width="9" height="13" viewBox="0 0 9 13"><path d="M.8 5.2 L4.5 .2 L8.2 5.2 Z" fill="#c9c9c9"/><path d="M.8 7.2 L4.5 12.2 L8.2 7.2 Z" fill="#cfcfcf"/></svg>
<div class="hl" style="top:68px;width:198px"></div>
<div class="td" style="left:24px;top:69px;width:64px">Отчество</div>
<div class="td" style="left:89px;top:69px;width:68px">двоичный</div>
<svg class="ic" style="left:162px;top:71px;opacity:.6" width="14" height="13" viewBox="0 0 14 13"><path d="M10.2 1.7 Q11.6 1 12.5 2.3 Q13.2 3.5 12.3 4.4 L4.7 11 L1.2 12 L1.9 8.6 Z" fill="#f9dc7a" stroke="#d9a755" stroke-width=".9" stroke-linejoin="round"/><path d="M1.9 8.6 L4.7 11 L1.2 12 Z" fill="#ead6ad" stroke="#b89a68" stroke-width=".6"/><path d="M3.6 8.9 L10.8 2.9" stroke="#fff4c0" stroke-width="1.2" fill="none"/></svg>
<svg class="ic" style="left:184px;top:72px" width="9" height="13" viewBox="0 0 9 13"><path d="M.8 5.2 L4.5 .2 L8.2 5.2 Z" fill="#c9c9c9"/><path d="M.8 7.2 L4.5 12.2 L8.2 7.2 Z" fill="#cfcfcf"/></svg>
<div class="hl" style="top:91px;width:198px"></div>
<svg class="ic" style="left:3px;top:95px" width="16" height="16" viewBox="0 0 16 16"><path d="M9.5 .5 L11 .5 L15.5 4.8 L15.6 6.2 L12.7 9.4 L10.5 10.1 L9.2 9.7 L4 15.2 L.9 15.5 L.4 14.6 L.4 11.6 L1.3 10.6 L2.2 11 L2.4 9.6 L3.6 9.6 L3.8 8.4 L5.4 7.7 L5.3 4.5 Z" fill="url(#kg)" stroke="#d6a441" stroke-width=".85" stroke-linejoin="round"/><path d="M10.5 3.4 L12.5 5" stroke="#cf9f36" stroke-width="1" stroke-linecap="round" fill="none"/><path d="M1.6 13.6 L7.6 7.6 L8.4 3.2" stroke="#fef6c0" stroke-width="1.3" fill="none" opacity=".75" stroke-linejoin="round"/></svg>
<div class="td" style="left:24px;top:92px;width:64px">Паспорт</div>
<div class="td" style="left:89px;top:92px;width:68px">двоичный</div>
<svg class="ic" style="left:162px;top:94px;opacity:.6" width="14" height="13" viewBox="0 0 14 13"><path d="M10.2 1.7 Q11.6 1 12.5 2.3 Q13.2 3.5 12.3 4.4 L4.7 11 L1.2 12 L1.9 8.6 Z" fill="#f9dc7a" stroke="#d9a755" stroke-width=".9" stroke-linejoin="round"/><path d="M1.9 8.6 L4.7 11 L1.2 12 Z" fill="#ead6ad" stroke="#b89a68" stroke-width=".6"/><path d="M3.6 8.9 L10.8 2.9" stroke="#fff4c0" stroke-width="1.2" fill="none"/></svg>
<svg class="ic" style="left:184px;top:95px" width="9" height="13" viewBox="0 0 9 13"><path d="M.8 5.2 L4.5 .2 L8.2 5.2 Z" fill="#c9c9c9"/><path d="M.8 7.2 L4.5 12.2 L8.2 7.2 Z" fill="#cfcfcf"/></svg>
<div class="hl" style="top:114px;width:198px"></div>
<div class="vl" style="left:23px;top:23px;height:91px"></div>
<div class="vl" style="left:88px;top:23px;height:91px"></div>
<div class="vl" style="left:157px;top:23px;height:91px"></div>
<svg class="ic" style="left:3px;top:118px" width="17" height="16" viewBox="0 0 17 16"><rect x="1.5" y="1.5" width="13" height="13" rx="1" fill="#f1f6fb" stroke="#8aa3d0" stroke-width="1.1"/><rect x="3" y="3.3" width="10" height="1" fill="#8cc48c"/><rect x="3" y="5.6" width="10" height="7.8" fill="#b4c4e6"/><rect x="4" y="6.3" width="1.2" height="1.2" fill="#fff"/><rect x="6" y="6.3" width="6" height="1.2" fill="#fff"/><rect x="4" y="8.4" width="1.2" height="1.2" fill="#fff"/><rect x="4" y="10.5" width="1.2" height="1.2" fill="#fff"/><path d="M4.6 10.2 L8.2 7.3 L8.2 8.3 L15.8 8.3 Q16.4 8.3 16.4 8.9 L16.4 11.6 Q16.4 12.2 15.8 12.2 L8.2 12.2 L8.2 13.1 Z" fill="#4caf50" stroke="#2e8b3a" stroke-width=".7" stroke-linejoin="round"/><rect x="9" y="9.3" width="6.4" height="1.6" fill="#8fd694"/></svg>
<a class="add" style="left:22px;top:115px">Добавить поле</a>
</div>
</div>
<div id="mini"><div class="vp"></div><b style="left:0px;top:0px;width:11px;height:7px"></b><b style="left:14px;top:2px;width:11px;height:6px"></b><b style="left:26px;top:2px;width:11px;height:7px"></b><b style="left:11px;top:8px;width:11px;height:7px"></b></div>
<div id="vsb"><i></i></div><div id="hsb"><i></i></div>
<div id="taskbar"><svg class="ic" style="left:16px;top:12px" width="17" height="17" viewBox="0 0 17 17"><path d="M0 2.4 L6.9 1.4 V8 H0 Z M7.8 1.3 L16.6 0 V8 H7.8 Z M0 8.9 H6.9 V15.5 L0 14.5 Z M7.8 8.9 H16.6 V16.9 L7.8 15.6 Z" fill="#fff"/></svg><svg class="ic" style="left:63px;top:10px" width="19" height="20" viewBox="0 0 19 20"><circle cx="11.4" cy="7.6" r="5.3" fill="none" stroke="#fff" stroke-width="1.4"/><path d="M7.6 11.6 L1.2 17.8" stroke="#fff" stroke-width="1.5" stroke-linecap="round"/></svg><svg class="ic" style="left:115px;top:8px" width="25" height="25" viewBox="0 0 25 25"><defs><linearGradient id="al" x1="1" y1="0" x2="0" y2="1"><stop offset="0" stop-color="#7c63f7"/><stop offset="1" stop-color="#c24ef2"/></linearGradient></defs><circle cx="12.6" cy="12.2" r="12.1" fill="url(#al)"/><path d="M11.2 7.4 Q12.6 5.4 14 7.4 L18 14 Q19 16.8 16 17 H9.2 Q6.2 16.8 7.2 14 Z" fill="#fff"/></svg><svg class="ic" style="left:173px;top:10px" width="24" height="20" viewBox="0 0 24 20"><path d="M1 2.2 Q1 1 2.2 1 H8 L10 3 H21.6 Q22.8 3 22.8 4.2 V18 H1 Z" fill="#f4cf63"/><path d="M1 5 H22.8 V18.4 H1 Z" fill="#fbe597"/><path d="M4.6 19 V12.2 Q4.6 11 5.8 11 H18 Q19.2 11 19.2 12.2 V19 H14.8 V15 H9 V19 Z" fill="#3aa0e0"/><path d="M1 18 H4.6 M19.2 18 H22.8" stroke="#e9b84a" stroke-width="1"/></svg><div class="abs" style="left:165px;top:38px;width:40px;height:2px;background:#76b9ed"></div><svg class="ic" style="left:221px;top:9px" width="26" height="21" viewBox="0 0 26 21"><path d="M.8 7.6 L13 .6 L25.2 7.6 V20 H.8 Z" fill="#fff"/><path d="M2.2 7.8 L23.8 7.8 L15.4 13.2 L19.4 16.6 L13.4 13.8 Z" fill="#0c0c0c"/></svg><div class="abs" style="left:259px;top:0;width:48px;height:40px;background:#3c3c3c"></div><div class="abs" style="left:259px;top:38px;width:48px;height:2px;background:#76b9ed"></div><svg class="ic" style="left:271px;top:8px" width="24" height="24" viewBox="0 0 24 24"><circle cx="12" cy="11.8" r="11.4" fill="#ececec"/><path d="M6 5.6 L12 12.2 L18 5.6 M12 12 V18.8" fill="none" stroke="#e0262d" stroke-width="2.2"/></svg><svg class="ic" style="left:320px;top:7px" width="24" height="25" viewBox="0 0 24 25"><rect x=".8" y=".8" width="22" height="22.6" rx="1.6" fill="#e4e4e2" stroke="#f4f4f2" stroke-width="1"/><rect x="3" y="3" width="17.6" height="14.6" fill="#5d5f62"/><rect x="6.2" y="5.6" width="5.6" height="12" rx="1.2" fill="#1489d8"/><rect x="6.2" y="5.6" width="2" height="12" fill="#0f6fb8"/><rect x="1.4" y="17.6" width="20.8" height="5.4" fill="#d3d3d0"/><rect x="15.4" y="18.6" width="4.6" height="3" fill="#6fb6d6"/><rect x="3" y="22.6" width="3" height="2" fill="#9a9a98"/><rect x="17.6" y="22.6" width="3" height="2" fill="#9a9a98"/></svg><div class="abs" style="left:312px;top:38px;width:40px;height:2px;background:#76b9ed"></div><svg class="ic" style="left:1121px;top:16px" width="13" height="8" viewBox="0 0 13 8"><path d="M.6 7.4 L6.4 1.2 L12.2 7.4" fill="none" stroke="#fff" stroke-width="1.3"/></svg><svg class="ic" style="left:1143px;top:16px" width="17" height="9" viewBox="0 0 17 9"><rect x=".7" y=".7" width="13.8" height="7.6" fill="none" stroke="#fff" stroke-width="1.2"/><rect x="15" y="2.8" width="1.4" height="3.4" fill="#fff"/><rect x="2.2" y="2.2" width="6" height="4.6" fill="#fff"/></svg><svg class="ic" style="left:1169px;top:14px" width="14" height="14" viewBox="0 0 14 14"><g fill="none" stroke="#d8d8d8" stroke-width="1.1"><path d="M1 13 A12 12 0 0 1 13 1.2"/><path d="M4.2 13 A9 9 0 0 1 13 4.4"/><path d="M7.2 13 A6 6 0 0 1 13 7.4"/><path d="M10 13 A3.2 3.2 0 0 1 13 10.2"/></g><circle cx="12.2" cy="12.4" r="1.3" fill="#fff"/></svg><svg class="ic" style="left:1191px;top:13px" width="17" height="14" viewBox="0 0 17 14"><path d="M.7 4.6 H3.6 L7 1.2 V12.8 L3.6 9.4 H.7 Z" fill="none" stroke="#fff" stroke-width="1.1" stroke-linejoin="round"/><path d="M9.4 4.6 Q11 7 9.4 9.4 M11.6 2.8 Q14.2 7 11.6 11.2 M13.8 1 Q17.4 7 13.8 13" fill="none" stroke="#fff" stroke-width="1.1"/></svg><div class="tray" style="left:1218px;top:14px;font-size:11.4px">РУС</div><div class="tray" style="left:1266px;top:5px">21:46</div><div class="tray" style="left:1253px;top:23px">04.10.2019</div><svg class="ic" style="left:1324px;top:11.5px" width="26" height="26" viewBox="0 0 26 26"><path d="M1 .8 H17.4 V12 H7.2 L4 15.2 V12 H1 Z" fill="#fff"/><path d="M3.4 3.4 H15 M3.4 6 H15 M3.4 8.6 H15" stroke="#1c1b1c" stroke-width="1"/><circle cx="16.6" cy="15.6" r="7.4" fill="#2a2a2b" stroke="#8a8a8a" stroke-width="1"/><text x="16.6" y="19.4" text-anchor="middle" font-family="Liberation Sans, Arial, sans-serif" font-weight="bold" font-size="10.5" fill="#fff">2</text></svg><div class="abs" style="left:1361px;top:0;width:1px;height:40px;background:#5a5a5a"></div></div>
<div id="strip"><div class="a"></div><div class="b"></div></div>
</body></html>
